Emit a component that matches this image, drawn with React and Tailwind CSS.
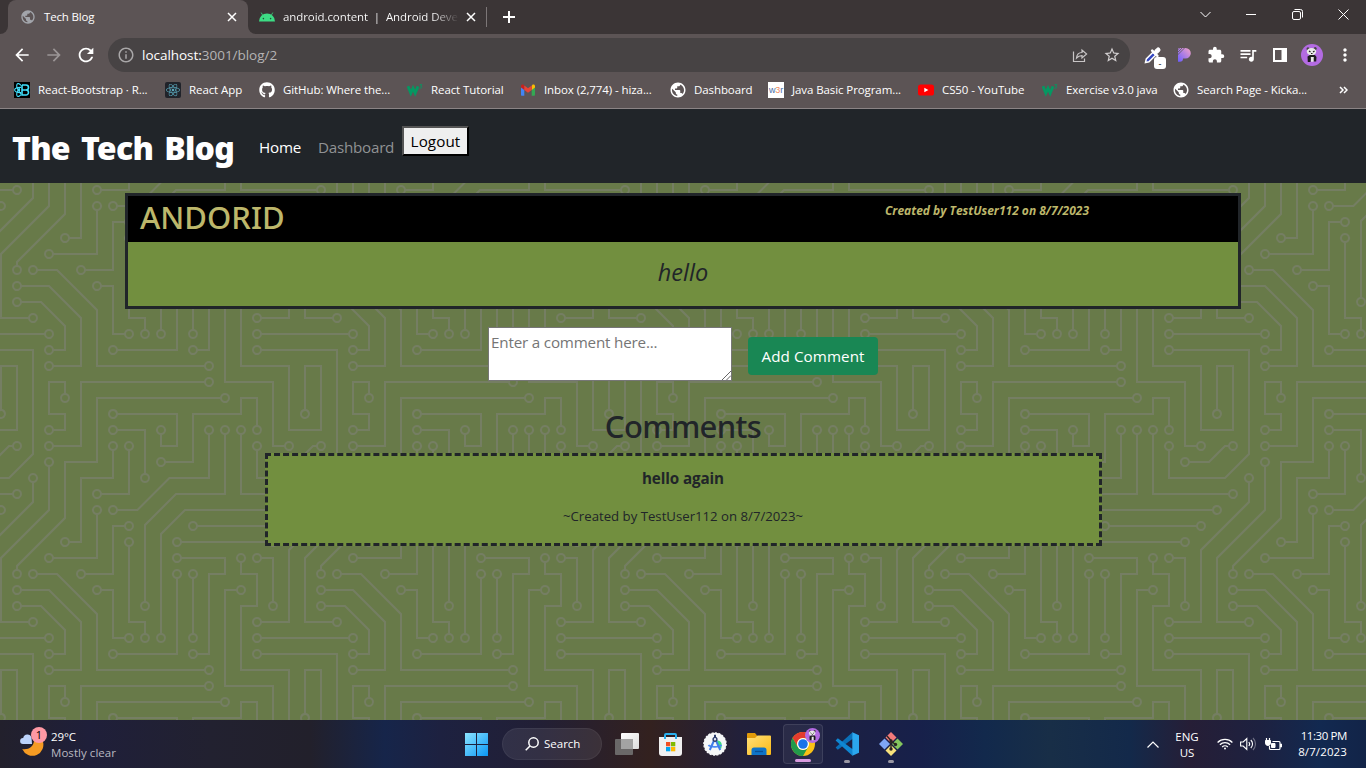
import React from "react";
import { FaGithub, FaReact } from "react-icons/fa";
import { MdPublic, MdOutlineInfo, MdExtension, MdStarBorder, MdArrowBack, MdArrowForward, MdRefresh, MdMoreVert, MdQueueMusic } from "react-icons/md";

const CIRCUIT =
  "M44.1 224a5 5 0 1 1 0 2H0v-2h44.1zm160 48a5 5 0 1 1 0 2H82v-2h122.1zm57.8-46a5 5 0 1 1 0-2H304v2h-42.1zm0 16a5 5 0 1 1 0-2H304v2h-42.1zm6.2-114a5 5 0 1 1 0 2h-86.2a5 5 0 1 1 0-2h86.2zm-256-48a5 5 0 1 1 0 2H0v-2h12.1zm185.8 34a5 5 0 1 1 0-2h86.2a5 5 0 1 1 0 2h-86.2zM258 12.1a5 5 0 1 1-2 0V0h2v12.1zm-64 208a5 5 0 1 1-2 0v-54.2a5 5 0 1 1 2 0v54.2zm48-198.2V80h62v2h-64V21.9a5 5 0 1 1 2 0zm16 16V64h46v2h-48V37.9a5 5 0 1 1 2 0zm-128 96V208h16v12.1a5 5 0 1 1-2 0V210h-16v-76.1a5 5 0 1 1 2 0zm-5.9-21.9a5 5 0 1 1 0 2H114v48H85.9a5 5 0 1 1 0-2H112v-48h12.1zm-6.2 130a5 5 0 1 1 0-2H176v-74.1a5 5 0 1 1 2 0V242h-60.1zm-16-64a5 5 0 1 1 0-2H114v48h10.1a5 5 0 1 1 0 2H112v-48h-10.1zM66 284.1a5 5 0 1 1-2 0V274H50v30h-2v-32h18v12.1zM236.1 176a5 5 0 1 1 0 2H226v94h48v32h-2v-30h-48v-98h12.1zm25.8-30a5 5 0 1 1 0-2H274v44.1a5 5 0 1 1-2 0V146h-10.1zm-64 96a5 5 0 1 1 0-2H208v-80h16v-14h-42.1a5 5 0 1 1 0-2H226v18h-16v80h-12.1zm86.2-210a5 5 0 1 1 0 2H272V0h2v32h10.1zM98 101.9V146H53.9a5 5 0 1 1 0-2H96v-42.1a5 5 0 1 1 2 0zM53.9 34a5 5 0 1 1 0-2H80V0h2v34H53.9zm60.1 3.9V66H82v64H69.9a5 5 0 1 1 0-2H80V64h32V37.9a5 5 0 1 1 2 0zM101.9 82a5 5 0 1 1 0-2H128V37.9a5 5 0 1 1 2 0V82h-28.1zm16-64a5 5 0 1 1 0-2H146v44.1a5 5 0 1 1-2 0V18h-26.1zm102.2 270a5 5 0 1 1 0 2H98v14h-2v-16h124.1zM242 149.9V160h16v34h-16v62h48v48h-2v-46h-48v-66h16v-30h-16v-12.1a5 5 0 1 1 2 0zM53.9 18a5 5 0 1 1 0-2H64V2H48V0h18v18H53.9zm112 32a5 5 0 1 1 0-2H192V0h50v2h-48v48h-28.1zm-48-48a5 5 0 0 1-9.8-2h2.07a3 3 0 1 0 5.66 0H178v34h-18V21.9a5 5 0 1 1 2 0V32h14V2h-58.1zm0 96a5 5 0 1 1 0-2H137l32-32h39V21.9a5 5 0 1 1 2 0V66h-40.17l-32 32H117.9zm28.1 90.1a5 5 0 1 1-2 0v-76.51L175.59 80H224V21.9a5 5 0 1 1 2 0V82h-49.59L146 112.41v75.69zm16 32a5 5 0 1 1-2 0v-99.51L184.59 96H300.1a5 5 0 0 1 3.9-3.9v2.07a3 3 0 0 0 0 5.66v2.07a5 5 0 0 1-3.9-3.9H185.41L162 121.41v98.69zm-144-64a5 5 0 1 1-2 0v-3.51l48-48V48h32V0h2v50H66v55.41l-48 48v2.69zM50 53.9v43.51l-48 48V208h26.1a5 5 0 1 1 0 2H0v-65.41l48-48V53.9a5 5 0 1 1 2 0zm-16 16V89.41l-34 34v-2.82l32-32V69.9a5 5 0 1 1 2 0zM12.1 32a5 5 0 1 1 0 2H9.41L0 43.41V40.6L8.59 32h3.51zm265.8 18a5 5 0 1 1 0-2h18.69l7.41-7.41v2.82L297.41 50H277.9zm-16 160a5 5 0 1 1 0-2H288v-71.41l16-16v2.82l-14 14V210h-28.1zm-208 32a5 5 0 1 1 0-2H64v-22.59L40.59 194H21.9a5 5 0 1 1 0-2H41.41L66 216.59V242H53.9zm150.2 14a5 5 0 1 1 0 2H96v-56.6L56.6 162H37.9a5 5 0 1 1 0-2h19.5L98 200.6V256h106.1zm-150.2 2a5 5 0 1 1 0-2H80v-46.59L48.59 178H21.9a5 5 0 1 1 0-2H49.41L82 208.59V258H53.9zM34 39.8v1.61L9.41 66H0v-2h8.59L32 40.59V0h2v39.8zM2 300.1a5 5 0 0 1 3.9 3.9H3.83A3 3 0 0 0 0 302.17V256h18v48h-2v-46H2v42.1zM34 241v63h-2v-62H0v-2h34v1zM17 18H0v-2h16V0h2v18h-1zm273-2h14v2h-16V0h2v16zm-32 273v15h-2v-14h-14v14h-2v-16h18v1zM0 92.1A5.02 5.02 0 0 1 6 97a5 5 0 0 1-6 4.9v-2.07a3 3 0 1 0 0-5.66V92.1zM80 272h2v32h-2v-32zm37.9 32h-2.07a3 3 0 0 0-5.66 0h-2.07a5 5 0 0 1 9.8 0zM5.9 0A5.02 5.02 0 0 1 0 5.9V3.83A3 3 0 0 0 3.83 0H5.9zm294.2 0h2.07A3 3 0 0 0 304 3.83V5.9a5 5 0 0 1-3.9-5.9zm3.9 300.1v2.07a3 3 0 0 0-1.83 1.83h-2.07a5 5 0 0 1 3.9-3.9z";

// Centres of the solder pads in one tile.
const PADS = [
  [49,225],[209,273],[257,225],[257,241],[273,129],[177,129],[17,81],[193,113],[289,113],[257,17],[193,225],[193,161],
  [241,17],[257,33],[145,225],[129,129],[129,113],[81,161],[113,241],[177,161],[97,177],[129,225],[65,289],[241,177],
  [257,145],[273,193],[193,241],[177,145],[289,33],[97,97],[49,145],[49,33],[113,33],[65,129],[97,81],[129,33],
  [113,17],[145,65],[225,289],[241,145],[49,17],[161,49],[161,17],[113,97],[209,17],[145,193],[225,17],[161,225],
  [17,161],[49,49],[33,209],[33,65],[17,33],[273,49],[257,209],[49,241],[17,193],[209,257],[33,161],[49,257],[17,177],
];

function CircuitBackground() {
  return (
    <svg className="absolute inset-0 h-full w-full" aria-hidden="true">
      <defs>
        <pattern id="circuit" width="304" height="304" patternUnits="userSpaceOnUse">
          <rect width="304" height="304" fill="#687a49" />
          <path d={CIRCUIT} fill="#757e63" />
          {PADS.map(([x, y]) => <circle key={x + "-" + y} cx={x} cy={y} r="3" fill="#687a49" />)}
        </pattern>
      </defs>
      <rect width="100%" height="100%" fill="url(#circuit)" />
    </svg>
  );
}

const Close = ({ className }) => (
  <svg viewBox="0 0 10 10" className={className} fill="none" stroke="#fff" strokeWidth="1.5"><path d="M1 1l8 8M9 1l-8 8" /></svg>
);

const AndroidHead = () => (
  <svg viewBox="0 0 16 10" className="h-[10px] w-4">
    <path d="M0 9.5a8 8 0 0 1 16 0z" fill="#3ddc84" />
    <path d="M3.8 3.4L2.2.6M12.2 3.4L13.8.6" stroke="#3ddc84" strokeWidth=".8" />
    <circle cx="4.4" cy="6.6" r=".8" fill="#20523a" /><circle cx="11.6" cy="6.6" r=".8" fill="#20523a" />
  </svg>
);

const W3 = () => (
  <svg viewBox="0 0 16 16" className="size-4">
    <path d="M1 4.2l2.8 7L6 6.2l2.2 5L11 4.4" fill="none" stroke="#059862" strokeWidth="2.8" />
    <path d="M12.6 2.6h2.2l-1.2 1.6c1.6 0 1.6 2.4-.9 2" fill="none" stroke="#059862" strokeWidth=".9" />
  </svg>
);

const Bootstrap = () => (
  <svg viewBox="0 0 16 16" className="size-4">
    <rect width="16" height="16" fill="#000" />
    <g fill="none" stroke="#41e0fd" strokeWidth="1.1">
      <path d="M8 3v10h4a2.5 2.5 0 0 0 0-5H8M12 8a2.5 2.5 0 0 0 0-5H8" strokeWidth="1.6" />
      <path d="M7 5.400C3 5.200.6 6.600.6 8s2.400 2.800 6.400 2.600" />
      <path d="M7 3.400C5.400 1.400 3.600 1 3 2.200c-.8 1.800.4 5 2.600 8 .6 .8 1 1.400 1.400 1.800" />
      <path d="M7 12.600c-1.600 2-3.400 2.400-4 1.200-.8-1.800.4-5 2.600-8" />
    </g>
    <circle cx="5" cy="8" r="1.200" fill="#41e0fd" />
  </svg>
);

const ReactTile = () => (
  <span className="flex size-4 items-center justify-center rounded-[2px] bg-[#20232a]"><FaReact className="size-[14px] text-[#5ba9bd]" /></span>
);

const Gmail = () => (
  <svg viewBox="0 0 16 16" className="size-4">
    <path d="M1 4.500v8.200c0 .6.4 1 1 1h2.300V7z" fill="#4285f4" />
    <path d="M15 4.500v8.200c0 .6-.4 1-1 1h-2.300V7z" fill="#34a853" />
    <path d="M11.700 4v4L15 5.500V4c0-1.500-1.600-2-2.600-1.200z" fill="#fbbc04" />
    <path d="M4.300 4v4L1 5.500V4c0-1.500 1.600-2 2.600-1.200z" fill="#c5221f" />
    <path d="M4.300 3.400L8 6.200l3.700-2.800V8L8 10.800 4.300 8z" fill="#ea4335" />
  </svg>
);

const W3r = () => (
  <span className="flex size-4 items-center justify-center bg-white font-['Liberation_Sans'] text-[9px] leading-none tracking-[-0.2px] text-[#4a6da8]">w<span className="text-[#f08a5d]">3</span>r</span>
);

const YouTube = () => (
  <svg viewBox="0 0 16 16" className="size-4"><rect y="2.500" width="16" height="11" rx="2.600" fill="#f00" /><path d="M6.300 5.700v4.600L10.400 8z" fill="#fff" /></svg>
);

const Globe = () => <MdPublic className="-m-px size-[18px] text-white" />;

const BOOKMARKS = [
  [Bootstrap, "React-Bootstrap · R...", "w-[151px]"],
  [ReactTile, "React App", "w-[94px]"],
  [() => <FaGithub className="size-4 text-white" />, "GitHub: Where the...", "w-[148px]"],
  [W3, "React Tutorial", "w-[113px]"],
  [Gmail, "Inbox (2,774) - hiza...", "w-[150px]"],
  [Globe, "Dashboard", "w-[98px]"],
  [W3r, "Java Basic Program...", "w-[150px]"],
  [YouTube, "CS50 - YouTube", "w-[124px]"],
  [W3, "Exercise v3.0 java", "w-[131px]"],
  [Globe, "Search Page - Kicka...", "w-[166px]"],
];

const Panda = ({ className }) => (
  <svg viewBox="0 0 22 22" className={className}>
    <circle cx="11" cy="11" r="11" fill="#b36be2" />
    <circle cx="7" cy="4.800" r="1.500" fill="#444" /><circle cx="14.200" cy="4.600" r="1.500" fill="#444" />
    <ellipse cx="10.500" cy="7.600" rx="4.700" ry="3.600" fill="#e8e8e8" />
    <path d="M8 7l1.500 1M13.500 7L12 8M10 9.500h1.500" stroke="#222" strokeWidth="1.200" />
    <path d="M6.500 12.500L9 11h5l1.500 2-.3 4.500h-2.700L12 15h-2l-.5 3H6.800z" fill="#1c1c1c" />
    <path d="M9.800 13h3l-.2 4.800h-2.600z" fill="#e8e8e8" />
  </svg>
);

function TabStrip() {
  return (
    <div className="flex h-[34px] bg-[#3b3536]">
      <div className="w-2 bg-[#5c5455]"><div className="h-full rounded-br-[8px] bg-[#3b3536]" /></div>
      <div className="flex w-[240px] items-center rounded-t-[8px] bg-[#5c5455] pr-[11px] pl-3">
        <MdPublic className="size-4 text-[#a2a5ab]" />
        <span className="ml-2 flex-1 text-[11.5px] tracking-[-0.18px] text-white">Tech Blog</span>
        <Close className="size-[10px]" />
      </div>
      <div className="w-2 bg-[#5c5455]"><div className="h-full rounded-bl-[8px] bg-[#3b3536]" /></div>
      <div className="flex items-center pl-[3px]">
        <AndroidHead />
        <span className="ml-2 w-[176px] overflow-hidden bg-gradient-to-r from-white from-85% to-transparent bg-clip-text text-[11.5px] tracking-[-0.08px] whitespace-pre text-transparent">android.content  |  Android Devel</span>
        <Close className="ml-[7px] size-[10px]" />
        <div className="ml-[10px] h-5 w-px bg-[#7c7677]" />
        <svg viewBox="0 0 12 12" className="ml-4 size-3" stroke="#fff" strokeWidth="2"><path d="M6 0v12M0 6h12" /></svg>
      </div>
      <div className="ml-auto flex h-7 items-center gap-[35px] pr-[17px]">
        <svg viewBox="0 0 11 11" className="size-[11px]" fill="none" stroke="#fff"><path d="M.5 3l5 5 5-5" /></svg>
        <svg viewBox="0 0 11 11" className="size-[11px]" stroke="#fff"><path d="M0 5.500h10" /></svg>
        <svg viewBox="0 0 11 11" className="size-[11px]" fill="none" stroke="#fff"><rect x=".5" y="2.500" width="8" height="8" rx="1.500" /><path d="M2.500 .5h6a2 2 0 0 1 2 2v6" /></svg>
        <svg viewBox="0 0 11 11" className="size-[11px]" stroke="#fff"><path d="M.5 .5l10 10M10.500 .5l-10 10" /></svg>
      </div>
    </div>
  );
}

function Toolbar() {
  return (
    <div className="flex h-[42px] items-center bg-[#5c5455] pl-3">
      <MdArrowBack className="size-5 shrink-0 text-white" />
      <MdArrowForward className="ml-3 size-5 shrink-0 text-[#9b9596]" />
      <MdRefresh className="ml-[11px] size-[22px] shrink-0 text-white" />
      <div className="ml-[11px] flex h-[34px] w-[1022px] shrink-0 items-center rounded-full bg-[#474344] pr-[9px] pl-[9px]">
        <MdOutlineInfo className="size-[18px] text-[#a9a7a8]" />
        <span className="ml-[7px] flex-1 text-[13.5px] tracking-[-0.03px] text-[#b5b3b4]"><span className="text-white">localhost:</span>3001/blog/2</span>
        <svg viewBox="0 0 16 16" className="size-4" fill="none" stroke="#c8c5c6" strokeWidth="1.200">
          <path d="M1.500 4.500v10h11v-3" /><path d="M4.500 11c.4-4 2.600-5.500 5.500-5.500V3l4.600 4-4.600 4V8.600C7.500 8.600 6 9.300 4.500 11z" />
        </svg>
        <MdStarBorder className="ml-[15px] size-[18px] text-[#d2cfd0]" />
      </div>
      <div className="relative ml-[14px] size-[18px] shrink-0">
        <svg viewBox="0 0 18 18" className="size-[18px]">
          <path d="M1.500 16.500l.8-3.500L9 6.300l2.700 2.700L5 15.700z" fill="#3346c0" stroke="#fff" strokeWidth="1.500" />
          <path d="M8.200 4.600l5.200 5.200M11.200 6.800L14 4" stroke="#fff" strokeWidth="2.600" strokeLinecap="round" />
          <path d="M12.500 5.500l1.700-1.700" stroke="#fff" strokeWidth="4.600" strokeLinecap="round" />
        </svg>
        <span className="absolute top-[11px] left-[10px] flex size-3 items-center justify-center rounded-[3px] bg-white text-[9px] leading-none text-black">-</span>
      </div>
      <svg viewBox="0 0 14 14" className="ml-[15px] size-[14px] shrink-0">
        <defs><linearGradient id="pg" x1="0" y1="1" x2="1" y2="0"><stop offset="0" stopColor="#6a5cff" /><stop offset="1" stopColor="#f5a3c7" /></linearGradient></defs>
        <path d="M1 0h7.500a5.300 5.300 0 0 1 0 10.600H6A3.200 3.200 0 0 1 2.800 13.800H1z" fill="url(#pg)" /><path d="M0 7.500L7.500 0M0 5l5-5M0 2.500L2.500 0" stroke="#5c5455" strokeWidth=".8" />
      </svg>
      <MdExtension className="ml-4 size-[18px] shrink-0 text-white" />
      <MdQueueMusic className="ml-[13px] size-5 shrink-0 text-white" />
      <svg viewBox="0 0 14 14" className="ml-[15px] size-[14px] shrink-0"><path fillRule="evenodd" d="M0 0h14v14H0zM2 2v10h6.500V2z" fill="#fff" /></svg>
      <Panda className="ml-[14px] size-[22px] shrink-0" />
      <MdMoreVert className="ml-3 size-5 shrink-0 text-white" />
    </div>
  );
}

function Bookmarks() {
  return (
    <div className="flex h-[33px] items-center border-b border-[#8b8485] bg-[#5c5455] pb-[4px] pl-[14px] text-[11.5px] tracking-[-0.09px] text-white">
      {BOOKMARKS.map(([Icon, label, width], i) => (
        <div key={i} className={"flex shrink-0 items-center gap-2 whitespace-nowrap " + width}>
          <span className="size-4 shrink-0"><Icon /></span>{label}
        </div>
      ))}
      <svg viewBox="0 0 9 8" className="h-2 w-[9px]" fill="none" stroke="#fff" strokeWidth="1.500"><path d="M1 1l3 3-3 3M5 1l3 3-3 3" /></svg>
    </div>
  );
}

function Page() {
  return (
    <main className="relative h-[611px] overflow-hidden text-[#212529]">
      <CircuitBackground />
      <div className="relative flex flex-col items-center">
        <nav className="flex h-[74px] w-full items-center bg-[#212529] pl-3 text-[15.2px] leading-6">
          <span className="w-[247px] pt-[3px] font-['Noto_Sans'] text-[32px] font-black tracking-[-0.75px] [word-spacing:3.5px] text-white">The Tech Blog</span>
          <span className="w-[59px] pt-px tracking-[-0.2px] text-white">Home</span>
          <span className="w-[84px] pt-px tracking-[-0.25px] text-[#909294]">Dashboard</span>
          <button className="mb-[11px] flex h-[30px] w-[67px] items-center justify-center border-2 border-t-[#555] border-r-black border-b-black border-l-[#555] bg-[#efefef] tracking-[0.1px] text-black">Logout</button>
        </nav>
        <section className="mt-[10px] h-[116px] w-[1116px] border-[3px] border-[#212529] bg-[#728f3f]">
          <div className="flex h-[46px] bg-black px-3 text-[#bdb76b]">
            <h2 className="w-[745px] pt-[2px] font-['Noto_Sans'] text-[31px] leading-[38px] font-medium">ANDORID</h2>
            <span className="pt-[6px] text-[12px] leading-[18px] font-bold italic">Created by TestUser112 on 8/7/2023</span>
          </div>
          <p className="pt-[12px] text-center text-[23.5px] leading-9 italic">hello</p>
        </section>
        <form className="mt-[18px] flex items-start gap-4">
          <div className="relative h-[54px] w-[244px] border border-[#767676] bg-white px-[2px] pt-[2px] text-[15.2px] leading-6 tracking-[-0.18px] text-[#757575]">
            Enter a comment here...
            <svg viewBox="0 0 9 9" className="absolute right-0 bottom-0 size-[9px]" stroke="#555" strokeWidth=".9"><path d="M0 9l9-9M4.500 9L9 4.500" /></svg>
          </div>
          <div className="mt-[10px] flex h-[38px] w-[130px] items-center justify-center rounded-[4px] bg-[#198754] text-[15.2px] tracking-[0.08px] text-white">Add Comment</div>
        </form>
        <h2 className="mt-[26px] font-['Noto_Sans'] text-[31px] leading-[38px] font-medium tracking-[-0.65px]">Comments</h2>
        <section className="mt-[8px] flex h-[93px] w-[837px] flex-col items-center border-[3px] border-dashed border-[#212529] bg-[#728f3f]">
          <h3 className="mt-[10px] text-[15.2px] leading-6 font-bold tracking-[-0.1px]">hello again</h3>
          <p className="mt-[16px] text-[13.2px] leading-[21px]">~Created by TestUser112 on 8/7/2023~</p>
        </section>
      </div>
    </main>
  );
}

const Windows = () => (
  <svg viewBox="0 0 23 23" className="size-[23px]"><defs><linearGradient id="wn" x1="0" y1="0" x2="1" y2="1"><stop stopColor="#8ce4ff" /><stop offset="1" stopColor="#0a97f5" /></linearGradient></defs><path d="M0 0h11v11H0zM12 0h11v11H12zM0 12h11v11H0zM12 12h11v11H12z" fill="url(#wn)" /></svg>
);
const TaskView = () => (
  <svg viewBox="0 0 24 22" className="h-[22px] w-6"><defs><linearGradient id="tv" x1="0" y1="0" x2="1" y2="1"><stop stopColor="#fff" /><stop offset="1" stopColor="#ddd" /></linearGradient></defs><rect x="6" width="18" height="16" rx="1" fill="url(#tv)" /><rect y="6" width="18" height="16" rx="1" fill="#6a6868" /><path d="M6 6h12v10H6z" fill="#a3a3a3" /></svg>
);
const Store = () => (
  <svg viewBox="0 0 23 23" className="size-[23px]"><path d="M6 5V2a1 1 0 0 1 1-1h9a1 1 0 0 1 1 1v3" fill="none" stroke="#2bb0ee" strokeWidth="2" /><path d="M0 4h23v16a3 3 0 0 1-3 3H3a3 3 0 0 1-3-3z" fill="#f0f0f0" /><path d="M5 4h2v2H5zM16 4h2v2h-2z" fill="#2bb0ee" /><path d="M7 9h4.300v4.300H7z" fill="#f25022" /><path d="M12 9h4.300v4.300H12z" fill="#7fba00" /><path d="M7 14h4.300v4.300H7z" fill="#00a4ef" /><path d="M12 14h4.300v4.300H12z" fill="#ffb900" /></svg>
);
const Studio = () => (
  <svg viewBox="0 0 24 24" className="size-6">
    <circle cx="12" cy="12" r="11.200" fill="#f5f7f8" stroke="#f5f7f8" strokeWidth="1.200" strokeDasharray="2 1.500" />
    <path d="M14 8.500c4-.5 6 3.500 4 8.500l-3-3z" fill="#3ddc84" />
    <path d="M5.500 13c1.500 2.200 10.500 2.600 13 0" fill="none" stroke="#4a8af5" strokeWidth="1.800" />
    <path d="M11 8.500L6.800 18M13 8.500l4.200 9.500" stroke="#3f7de8" strokeWidth="2" />
    <circle cx="12" cy="7.300" r="1.900" fill="#dfe6f5" stroke="#2c3c6c" strokeWidth="1.400" />
    <path d="M12 2.800V5.500" stroke="#2c3c6c" strokeWidth="2" />
  </svg>
);
const Folder = () => (
  <svg viewBox="0 0 24 22" className="h-[22px] w-6"><defs><linearGradient id="fd" x1="0" y1="0" x2="1" y2="1"><stop stopColor="#ffe07a" /><stop offset="1" stopColor="#fbb914" /></linearGradient></defs><path d="M0 1a1 1 0 0 1 1-1h7l2 2.500V5H0z" fill="#e19a09" /><path d="M0 5h8l2.500-2.500H23a1 1 0 0 1 1 1V21a1 1 0 0 1-1 1H1a1 1 0 0 1-1-1z" fill="url(#fd)" /><path d="M4.500 22v-5a2.500 2.500 0 0 1 2.500-2.500h10a2.500 2.500 0 0 1 2.500 2.500v5z" fill="#0f74c8" /><path d="M8 18.500h8" stroke="#0a4f94" strokeWidth="1.300" /></svg>
);
const Chrome = () => (
  <svg viewBox="0 0 24 24" className="size-6"><circle cx="12" cy="12" r="12" fill="#fbc116" /><path d="M1.600 6A12 12 0 0 1 22.400 6H12a6 6 0 0 0-5.200 9z" fill="#e33b2e" /><path d="M1.600 6A12 12 0 0 0 12 24l5.200-9a6 6 0 0 1-10.400 0z" fill="#229a4b" /><circle cx="12" cy="12" r="6" fill="#fff" /><circle cx="12" cy="12" r="4.800" fill="#1a73e8" /></svg>
);
const Code = () => (
  <svg viewBox="0 0 24 24" className="size-6">
    <path d="M17.500.3L.6 15.600l2.200 2.100L18 6.500z" fill="#0a6fb8" />
    <path d="M17.500 23.700L.6 8.400l2.200-2.100L18 17.500z" fill="#0f86d2" />
    <path d="M17.300.2L24 3.200v17.600l-6.700 3z" fill="#2ba7ee" />
  </svg>
);
const Git = () => (
  <svg viewBox="0 0 24 24" className="size-6"><path d="M12 0l5.500 5.500L12 11 6.500 5.500z" fill="#f27a7a" /><path d="M5.500 6.500L11 12l-5.500 5.500L0 12z" fill="#7ea6f4" /><path d="M18.500 6.500L24 12l-5.500 5.500L13 12z" fill="#84c55e" /><path d="M12 13l5.500 5.500L12 24l-5.500-5.500z" fill="#f8e27c" /><path d="M8 4l4 4.500V17M12 9l4.500 3.500" fill="none" stroke="#2a2422" strokeWidth="1.400" /><circle cx="12" cy="9" r="1.700" fill="#2a2422" /><circle cx="16.500" cy="12.500" r="1.700" fill="#2a2422" /><circle cx="12" cy="17" r="1.700" fill="#2a2422" /></svg>
);

function Taskbar() {
  return (
    <footer className="flex h-12 items-center bg-[linear-gradient(90deg,#22202c_0px,#1f1f3a_90px,#222130_210px,#22202b_310px,#16254a_385px,#1d2140_440px,#221f35_540px,#33211f_650px,#22203a_740px,#1b2044_850px,#17204a_920px,#12294c_985px,#182e47_1050px,#13294a_1130px,#261e36_1190px,#1d2140_1260px,#122950_1320px,#122448_1366px)] pl-5 text-[11.5px] text-white">
      <div className="relative h-8 w-[31px]">
        <svg viewBox="0 0 24 24" className="mt-[4px] size-6"><path d="M22.500 8.500a10.500 10.500 0 0 1-20.300 8.600c6 1 11.500-2 11.800-8.500z" fill="#f59b23" /><path d="M3 12a3 3 0 0 1 .2-6 4.300 4.300 0 0 1 8.300-.5L12 12z" fill="#bcd3fb" /></svg>
        <span className="absolute top-[-1px] left-[11px] flex size-4 items-center justify-center rounded-full bg-[#ff99a4] text-[11px] text-black">1</span>
      </div>
      <div className="w-[414px] pt-[2px] leading-4"><div className="tracking-[-0.1px]">29°C</div><div className="tracking-[0.05px] text-[#b9b8c0]">Mostly clear</div></div>
      <Windows />
      <div className="ml-[14px] flex h-8 w-[100px] items-center rounded-full border border-white/5 bg-white/8 pl-[22px]">
        <svg viewBox="0 0 14 14" className="size-[14px]" fill="none" stroke="#fff" strokeWidth="1.500"><circle cx="8.500" cy="5.500" r="4.700" /><path d="M5 9L.7 13.300" /></svg>
        <span className="ml-[5px]">Search</span>
      </div>
      <div className="ml-[13px]"><TaskView /></div>
      <div className="ml-5"><Store /></div>
      <div className="ml-[21px]"><Studio /></div>
      <div className="ml-5"><Folder /></div>
      <div className="relative ml-3 flex h-10 w-10 items-center rounded-[4px] border border-white/10 bg-white/5 pl-[7px]">
        <Chrome />
        <Panda className="absolute top-[3px] left-[21px] size-[15px]" />
        <span className="absolute bottom-[1px] left-[11px] h-[3px] w-4 rounded-full bg-[#d99be0]" />
      </div>
      <div className="relative ml-3"><Code /><span className="absolute top-[28px] left-[9px] h-[3px] w-[6px] rounded-full bg-[#9a98a4]" /></div>
      <div className="relative ml-5"><Git /><span className="absolute top-[28px] left-[9px] h-[3px] w-[6px] rounded-full bg-[#9a98a4]" /></div>
      <svg viewBox="0 0 12 7" className="ml-[244px] h-[7px] w-3" fill="none" stroke="#fff" strokeWidth="1.200"><path d="M.5 6.500L6 1l5.500 5.500" /></svg>
      <div className="ml-4 w-6 pt-[2px] text-center leading-4"><div>ENG</div><div>US</div></div>
      <svg viewBox="0 0 16 12" className="ml-[18px] h-3 w-4" fill="none" stroke="#fff" strokeWidth="1.300"><path d="M.6 4.500a10.500 10.500 0 0 1 14.800 0M2.900 6.800a7.200 7.200 0 0 1 10.200 0M5.200 9a4 4 0 0 1 5.600 0" /><circle cx="8" cy="10.500" r="1" fill="#fff" stroke="none" /></svg>
      <svg viewBox="0 0 16 14" className="ml-[7px] h-[14px] w-4" fill="none" stroke="#fff" strokeWidth="1.100"><path d="M.6 5h2.600L6.800 1.500v11L3.200 9H.6zM8.800 5a3 3 0 0 1 0 4M10.800 3a5.500 5.500 0 0 1 0 8" /><path d="M13 1a8.500 8.500 0 0 1 0 12" opacity=".35" /></svg>
      <svg viewBox="0 0 17 13" className="ml-[9px] h-[13px] w-[17px]" fill="none" stroke="#fff"><path d="M7.500 3.500h6.500a1 1 0 0 1 1 1v6a1 1 0 0 1-1 1H5.500a1 1 0 0 1-1-1V8M1.500 0v3M4.500 0v3" strokeWidth="1.200" /><path d="M.5 2.500h5V5a2.500 2.500 0 0 1-5 0zM6.500 9.500v-4H10v4zM15.500 6h1v3h-1z" fill="#fff" /></svg>
      <div className="ml-auto pr-[19px] text-right leading-4"><div className="tracking-[-0.4px]">11:30 PM</div><div className="tracking-[0.12px]">8/7/2023</div></div>
    </footer>
  );
}

export default function App() {
  return (
    <div className="flex h-[768px] w-[1366px] flex-col overflow-hidden font-['Open_Sans','Noto_Sans',sans-serif]">
      <TabStrip />
      <Toolbar />
      <Bookmarks />
      <Page />
      <Taskbar />
    </div>
  );
}
